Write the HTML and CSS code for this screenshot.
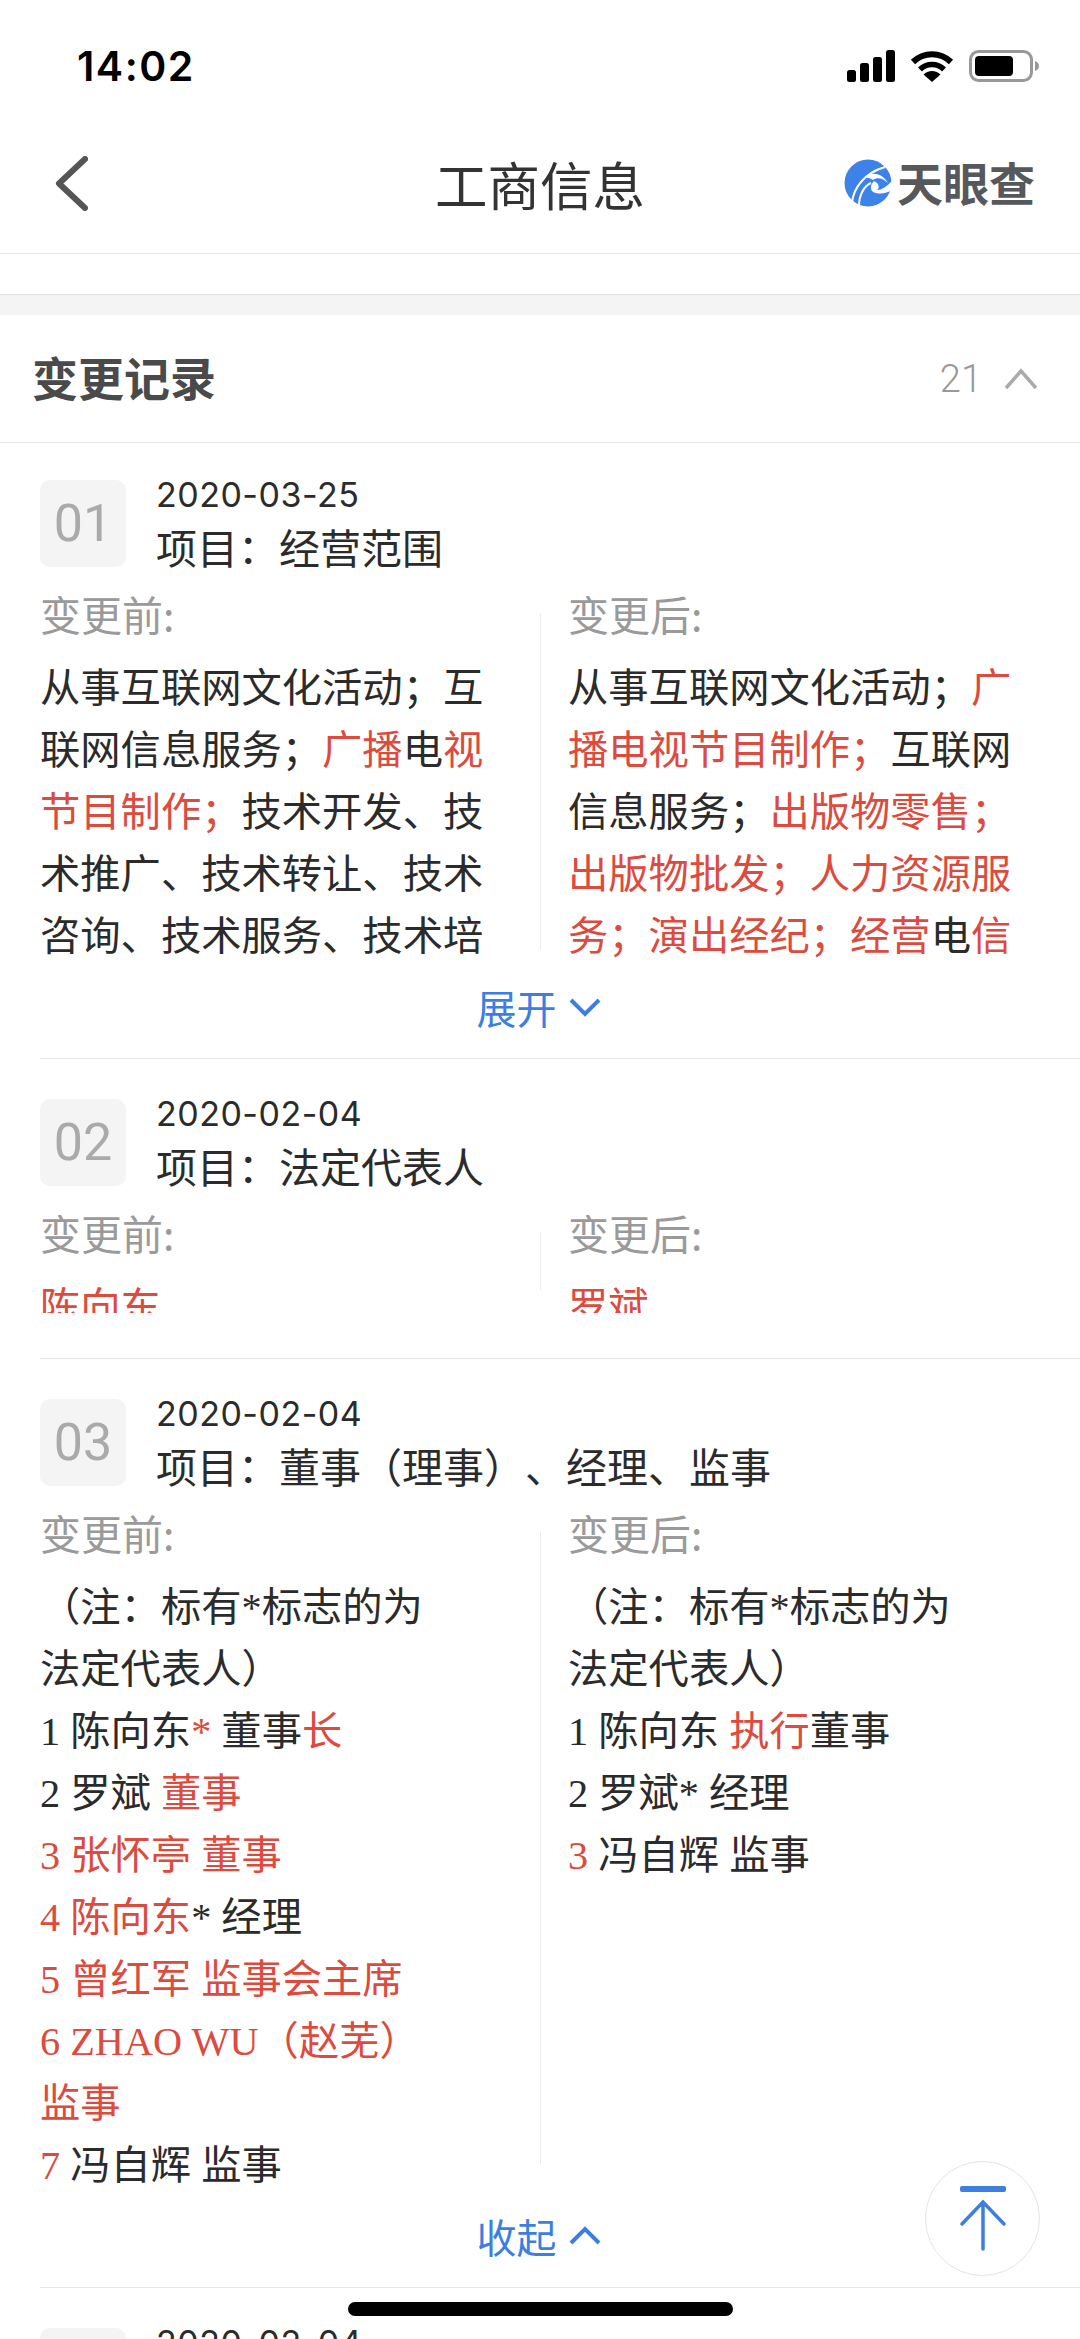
FILE: index.html
```html
<!DOCTYPE html>
<html lang="zh-CN">
<head>
    <meta charset="UTF-8">
    <meta name="viewport" content="width=device-width, initial-scale=1.0">
    <title>工商信息</title>
    <link rel="stylesheet" href="styles.css">
</head>
<body>
    <div class="page">
        <!-- 状态栏 -->
        <div class="status-bar">
            <span class="clock">14:02</span>
            <div class="status-icons">
                <svg class="icon-signal" width="48" height="32" viewBox="0 0 48 32">
                    <rect x="0" y="20" width="9" height="12" rx="2.5"/>
                    <rect x="13" y="13" width="9" height="19" rx="2.5"/>
                    <rect x="26" y="7" width="9" height="25" rx="2.5"/>
                    <rect x="39" y="0" width="9" height="32" rx="2.5"/>
                </svg>
                <svg class="icon-wifi" width="44" height="32" viewBox="0 0 44 32">
                    <path d="M3 12A27 27 0 0 1 41 12" fill="none" stroke="#000" stroke-width="6"/>
                    <path d="M10 19.5A17 17 0 0 1 34 19.5" fill="none" stroke="#000" stroke-width="5.5"/>
                    <path d="M22 32L13.5 24.5A12 12 0 0 1 30.5 24.5Z"/>
                </svg>
                <svg class="icon-battery" width="70" height="32" viewBox="0 0 70 32">
                    <rect x="1.5" y="1.5" width="61" height="29" rx="8" fill="none" stroke="#999" stroke-width="3"/>
                    <rect x="6" y="6" width="38" height="20" rx="4"/>
                    <path d="M66 11C69 12 70 14 70 16C70 18 69 20 66 21Z" fill="#999"/>
                </svg>
            </div>
        </div>

        <!-- 导航栏 -->
        <div class="nav-bar">
            <svg class="nav-back" width="33" height="55" viewBox="0 0 33 55">
                <path d="M30 3L4 27.500L30 52" fill="none" stroke="#555" stroke-width="6" stroke-linecap="round" stroke-linejoin="round"/>
            </svg>
            <h1 class="nav-title">工商信息</h1>
            <div class="brand">
                <svg class="brand-mark" width="48" height="48" viewBox="0 0 48 48">
                    <circle cx="24" cy="24" r="23.500" fill="#3d82e8"/>
                    <path d="M8 43C10 29 20 14 41 8" fill="none" stroke="#fff" stroke-width="2"/>
                    <path d="M15 47C15 36 20 27 27 24" fill="none" stroke="#fff" stroke-width="2"/>
                    <path d="M20 19C27 12 38 14 44 24C39 19 33 18 29 21C26 19 23 18 20 19Z" fill="#fff"/>
                    <path d="M30 22C35 24 36 29 33 31C38 31 42 28 48 22L48 31C42 35 33 36 28 32C26 29 27 25 30 22Z" fill="#fff"/>
                </svg>
                <span class="brand-name">天眼查</span>
            </div>
        </div>

        <div class="nav-gap"></div>
        <div class="band"></div>

        <!-- 变更记录 -->
        <div class="section-head">
            <h2 class="section-title">变更记录</h2>
            <div class="section-count">
                <span>21</span>
                <svg width="34" height="22" viewBox="0 0 34 22"><path d="M2 20L17 3L32 20" fill="none" stroke="#aaa" stroke-width="3.500"/></svg>
            </div>
        </div>

        <div class="record-list">
            <div class="record">
                <div class="record-head">
                    <div class="record-no">01</div>
                    <div class="record-meta">
                        <div class="record-date">2020-03-25</div>
                        <div class="record-item">项目：经营范围</div>
                    </div>
                </div>
                <div class="compare">
                    <div class="compare-col">
                        <div class="compare-label">变更前:</div>
                        <div class="compare-text clip-five">从事互联网文化活动；互联网信息服务；<span class="changed">广播</span>电<span class="changed">视节目制作；</span>技术开发、技术推广、技术转让、技术咨询、技术服务、技术培训</div>
                    </div>
                    <div class="compare-line line-first"></div>
                    <div class="compare-col">
                        <div class="compare-label">变更后:</div>
                        <div class="compare-text clip-five">从事互联网文化活动；<span class="changed">广播电视节目制作；</span>互联网信息服务；<span class="changed">出版物零售；出版物批发；人力资源服务；演出经纪；经营</span>电<span class="changed">信业务</span></div>
                    </div>
                </div>
                <div class="toggle">
                    <span>展开</span>
                    <svg width="32" height="20" viewBox="0 0 32 20"><path d="M2 3L16 17L30 3" fill="none" stroke="#3c7fe0" stroke-width="4"/></svg>
                </div>
            </div>

            <div class="record record-short">
                <div class="record-head">
                    <div class="record-no">02</div>
                    <div class="record-meta">
                        <div class="record-date">2020-02-04</div>
                        <div class="record-item">项目：法定代表人</div>
                    </div>
                </div>
                <div class="compare">
                    <div class="compare-col">
                        <div class="compare-label">变更前:</div>
                        <div class="compare-text clip-peek"><span class="changed">陈向东</span></div>
                    </div>
                    <div class="compare-line line-second"></div>
                    <div class="compare-col">
                        <div class="compare-label">变更后:</div>
                        <div class="compare-text clip-peek"><span class="changed">罗斌</span></div>
                    </div>
                </div>
            </div>

            <div class="record">
                <div class="record-head">
                    <div class="record-no">03</div>
                    <div class="record-meta">
                        <div class="record-date">2020-02-04</div>
                        <div class="record-item">项目：董事（理事）、经理、监事</div>
                    </div>
                </div>
                <div class="compare">
                    <div class="compare-col">
                        <div class="compare-label">变更前:</div>
                        <div class="compare-text">
                            （注：标有*标志的为<br>法定代表人）<br>
                            1 陈向东<span class="changed">*</span> 董事<span class="changed">长</span><br>
                            2 罗斌 <span class="changed">董事</span><br>
                            <span class="changed">3 张怀亭 董事</span><br>
                            <span class="changed">4 陈向东</span>* 经理<br>
                            <span class="changed">5 曾红军 监事会主席</span><br>
                            <span class="changed">6 ZHAO WU（赵芜）<br>监事</span><br>
                            <span class="changed">7</span> 冯自辉 监事
                        </div>
                    </div>
                    <div class="compare-line line-third"></div>
                    <div class="compare-col">
                        <div class="compare-label">变更后:</div>
                        <div class="compare-text">
                            （注：标有*标志的为<br>法定代表人）<br>
                            1 陈向东 <span class="changed">执行</span>董事<br>
                            2 罗斌* 经理<br>
                            <span class="changed">3</span> 冯自辉 监事
                        </div>
                    </div>
                </div>
                <div class="toggle">
                    <span>收起</span>
                    <svg width="32" height="20" viewBox="0 0 32 20"><path d="M2 17L16 3L30 17" fill="none" stroke="#3c7fe0" stroke-width="4"/></svg>
                </div>
            </div>

            <div class="record">
                <div class="record-head">
                    <div class="record-no">04</div>
                    <div class="record-meta">
                        <div class="record-date">2020-02-04</div>
                    </div>
                </div>
            </div>
        </div>

        <!-- 悬浮按钮和底部横条 -->
        <div class="back-top">
            <svg width="50" height="66" viewBox="0 0 50 66">
                <rect x="2" y="0" width="46" height="6" rx="2" fill="#3c7fe0"/>
                <path d="M25 63V18M4 38L25 16L46 38" fill="none" stroke="#3c7fe0" stroke-width="3.500" stroke-linecap="round"/>
            </svg>
        </div>
        <div class="home-bar"></div>
    </div>
</body>
</html>
```

FILE: styles.css
```css
* {
    box-sizing: border-box;
}

html, body {
    margin: 0;
    padding: 0;
}

body {
    font-family: "Noto Sans CJK SC", sans-serif;
    color: #2b2b2b;
    background-color: #fff;
    text-spacing-trim: space-all;
}

.page {
    position: relative;
    width: 1080px;
    height: 2339px;
    overflow: hidden;
}

/* 状态栏 */
.status-bar {
    display: flex;
    justify-content: space-between;
    align-items: flex-start;
    height: 113px;
    padding: 42px 41px 0 77px;
}

.clock {
    font-family: Inter, sans-serif;
    font-size: 41px;
    font-weight: 600;
    line-height: 48px;
    letter-spacing: 1.5px;
    color: #000;
}

.status-icons {
    display: flex;
    align-items: flex-start;
    gap: 15px;
    padding-top: 8px;
}

/* 导航栏 */
.nav-bar {
    display: flex;
    justify-content: space-between;
    align-items: center;
    position: relative;
    height: 141px;
    padding: 0 45px 0 55px;
    border-bottom: 1px solid #e6e6e6;
}

.nav-title {
    position: absolute;
    left: 0;
    right: 0;
    margin: 0;
    text-align: center;
    font-size: 52.500px;
    font-weight: 400;
    line-height: 140px;
    color: #333;
}

.brand {
    display: flex;
    align-items: center;
    gap: 5px;
}

.brand-name {
    padding-bottom: 4px;
    font-size: 46px;
    font-weight: 700;
    line-height: 50px;
    color: #56585c;
}

.nav-gap {
    height: 41px;
    border-bottom: 1px solid #e2e2e2;
}

.band {
    height: 20px;
    background-color: #f4f4f4;
}

/* 区块标题 */
.section-head {
    display: flex;
    justify-content: space-between;
    align-items: center;
    height: 128px;
    padding: 0 42px 0 32px;
    border-bottom: 1px solid #e6e6e6;
}

.section-title {
    margin: 0 0 5px;
    font-size: 46px;
    font-weight: 700;
    color: #4a4a4a;
}

.section-count {
    display: flex;
    align-items: center;
    gap: 22px;
    font-family: Roboto, sans-serif;
    font-size: 38px;
    font-weight: 300;
    color: #999;
}

/* 记录 */
.record-list {
    margin-left: 40px;
}

.record {
    padding-top: 40px;
    border-bottom: 1px solid #e6e6e6;
}

.record:first-child {
    padding-top: 37px;
}

.record-short {
    padding-bottom: 45px;
}

.record-head {
    display: flex;
    gap: 30px;
    height: 87px;
}

.record-no {
    width: 86px;
    height: 87px;
    border-radius: 10px;
    background-color: #f4f4f4;
    text-align: center;
    font-family: Roboto, sans-serif;
    font-size: 52px;
    font-weight: 400;
    line-height: 88px;
    color: #aaa;
}

.record-date {
    font-family: Inter, sans-serif;
    font-size: 34px;
    line-height: 30px;
    letter-spacing: 0.5px;
    color: #2b2b2b;
}

.record-item {
    margin-top: 9px;
    font-size: 41px;
    line-height: 54px;
    white-space: nowrap;
}

/* 变更前后对比 */
.compare {
    display: flex;
    align-items: flex-start;
    margin-top: 21px;
}

.compare-col {
    width: 446px;
}

.compare-line {
    width: 1px;
    margin: 25px 27px 0 54px;
    background-color: #ececec;
}

.line-first {
    height: 337px;
}

.line-second {
    height: 58px;
}

.line-third {
    height: 632px;
}

.compare-label {
    font-size: 41px;
    line-height: 50px;
    color: #9a9a9a;
}

.compare-text {
    margin-top: 20px;
    font-family: "Liberation Serif", "Noto Sans CJK SC", serif;
    font-size: 40.300px;
    line-height: 62px;
    overflow: hidden;
}

.clip-five {
    height: 310px;
}

.clip-peek {
    height: 36px;
}

.changed {
    color: #dc4b3e;
}

.toggle {
    display: flex;
    justify-content: center;
    align-items: center;
    gap: 12px;
    height: 50px;
    margin: 14px 43px 26px 0;
    font-size: 40px;
    color: #3c7fe0;
}

/* 悬浮按钮 */
.back-top {
    position: absolute;
    left: 925px;
    top: 2161px;
    display: flex;
    justify-content: center;
    align-items: center;
    width: 115px;
    height: 115px;
    border: 1px solid #e4e4e4;
    border-radius: 50%;
    background-color: #fff;
}

.home-bar {
    position: absolute;
    left: 348px;
    top: 2302px;
    width: 385px;
    height: 14px;
    border-radius: 7px;
    background-color: #000;
}
```
